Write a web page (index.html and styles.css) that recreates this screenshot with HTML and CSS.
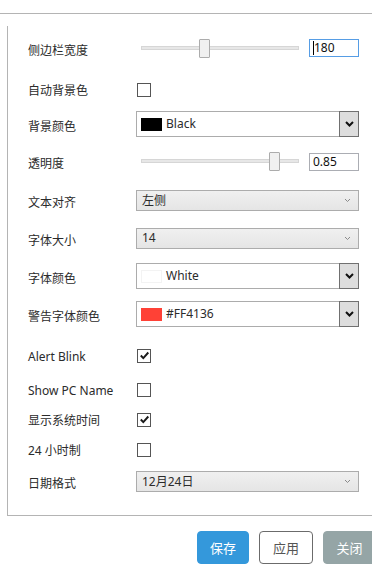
FILE: index.html
```html
<!DOCTYPE html>
<html lang="zh-CN">
<head>
    <meta charset="UTF-8">
    <meta name="viewport" content="width=device-width, initial-scale=1.0">
    <title>设置</title>
    <link rel="stylesheet" href="styles.css">
</head>
<body>
    <div class="window">
        <div class="tabs"></div>

        <div class="panel">
            <div class="form">
                <div class="label low">侧边栏宽度</div>
                <div class="field">
                    <div class="slider">
                        <div class="track"></div>
                        <div class="thumb" style="left: 58px"></div>
                    </div>
                    <div class="textbox focused"><span class="caret"></span>180</div>
                </div>

                <div class="label">自动背景色</div>
                <div class="field"><span class="checkbox"></span></div>

                <div class="label low">背景颜色</div>
                <div class="field">
                    <div class="colorbox">
                        <span class="swatch" style="background: #000000"></span>
                        <span class="value">Black</span>
                        <span class="dropbtn"><svg width="9" height="6" viewBox="0 0 9 6"><polyline points="1,1 4.5,4.5 8,1" fill="none" stroke="#111" stroke-width="2"/></svg></span>
                    </div>
                </div>

                <div class="label low">透明度</div>
                <div class="field">
                    <div class="slider">
                        <div class="track"></div>
                        <div class="thumb" style="left: 128px"></div>
                    </div>
                    <div class="textbox">0.85</div>
                </div>

                <div class="label low">文本对齐</div>
                <div class="field">
                    <div class="combo">
                        <span class="value">左侧</span>
                        <svg class="chevron" width="7" height="5" viewBox="0 0 7 5"><polyline points="1,1 3.5,3.5 6,1" fill="none" stroke="#8a8a8a" stroke-width="1"/></svg>
                    </div>
                </div>

                <div class="label low">字体大小</div>
                <div class="field">
                    <div class="combo">
                        <span class="value">14</span>
                        <svg class="chevron" width="7" height="5" viewBox="0 0 7 5"><polyline points="1,1 3.5,3.5 6,1" fill="none" stroke="#8a8a8a" stroke-width="1"/></svg>
                    </div>
                </div>

                <div class="label low">字体颜色</div>
                <div class="field">
                    <div class="colorbox">
                        <span class="swatch light" style="background: #ffffff"></span>
                        <span class="value">White</span>
                        <span class="dropbtn"><svg width="9" height="6" viewBox="0 0 9 6"><polyline points="1,1 4.5,4.5 8,1" fill="none" stroke="#111" stroke-width="2"/></svg></span>
                    </div>
                </div>

                <div class="label low">警告字体颜色</div>
                <div class="field">
                    <div class="colorbox">
                        <span class="swatch" style="background: #ff4136"></span>
                        <span class="value">#FF4136</span>
                        <span class="dropbtn"><svg width="9" height="6" viewBox="0 0 9 6"><polyline points="1,1 4.5,4.5 8,1" fill="none" stroke="#111" stroke-width="2"/></svg></span>
                    </div>
                </div>

                <div class="label">Alert Blink</div>
                <div class="field"><span class="checkbox"><svg width="11" height="11" viewBox="0 0 11 11"><polyline points="1.8,5.5 4.3,8.2 9.3,2.5" fill="none" stroke="#1a1a1a" stroke-width="1.9"/></svg></span></div>

                <div class="label">Show PC Name</div>
                <div class="field"><span class="checkbox"></span></div>

                <div class="label">显示系统时间</div>
                <div class="field"><span class="checkbox"><svg width="11" height="11" viewBox="0 0 11 11"><polyline points="1.8,5.5 4.3,8.2 9.3,2.5" fill="none" stroke="#1a1a1a" stroke-width="1.9"/></svg></span></div>

                <div class="label">24 小时制</div>
                <div class="field"><span class="checkbox"></span></div>

                <div class="label low">日期格式</div>
                <div class="field">
                    <div class="combo">
                        <span class="value">12月24日</span>
                        <svg class="chevron" width="7" height="5" viewBox="0 0 7 5"><polyline points="1,1 3.5,3.5 6,1" fill="none" stroke="#8a8a8a" stroke-width="1"/></svg>
                    </div>
                </div>
            </div>
        </div>

        <div class="actions">
            <button class="btn primary">保存</button>
            <button class="btn outline">应用</button>
            <button class="btn muted">关闭</button>
        </div>
    </div>
</body>
</html>
```

FILE: styles.css
```css
body {
    margin: 0;
    background: #ffffff;
    font-family: "Noto Sans", "Noto Sans CJK SC", sans-serif;
    font-size: 12px;
    line-height: 16px;
    color: #2b2b2b;
}
.window {
    width: 372px;
    overflow: hidden;
}
.tabs {
    height: 13px;
    border-bottom: 1px solid #b4b4b4;
}
.panel {
    margin: 12px 0 0 7px;
    border-left: 1px solid #b4b4b4;
    border-bottom: 1px solid #b4b4b4;
    padding: 1px 0 16px 20px;
}
.form {
    display: grid;
    grid-template-columns: 108px 223px;
    grid-template-rows: 42px 41px 28px 47px 31px 44px 32px 44px 39px 29px 31px 29px 35px;
    align-items: center;
}
.label {
    padding-top: 2px;
    white-space: nowrap;
}
.label.low {
    padding-top: 5px;
}
.field {
    display: flex;
    align-items: center;
}
.slider {
    position: relative;
    width: 158px;
    height: 19px;
    margin-left: 5px;
}
.track {
    position: absolute;
    left: 0;
    right: 0;
    top: 7px;
    height: 2px;
    background: #e7e7e7;
    border: 1px solid #d6d6d6;
}
.thumb {
    position: absolute;
    top: 0;
    width: 9px;
    height: 17px;
    background: #f0f0f0;
    border: 1px solid #acacac;
    border-radius: 1px;
}
.textbox {
    display: flex;
    align-items: center;
    box-sizing: border-box;
    width: 50px;
    height: 18px;
    margin-left: 10px;
    padding-left: 3px;
    border: 1px solid #abadb3;
    color: #111;
}
.textbox.focused {
    border-color: #569de5;
}
.caret {
    width: 1px;
    height: 14px;
    background: #000;
}
.checkbox {
    display: flex;
    align-items: center;
    justify-content: center;
    box-sizing: border-box;
    width: 14px;
    height: 14px;
    margin-left: 1px;
    border: 1px solid #555;
    background: #fff;
}
.colorbox {
    display: flex;
    align-items: center;
    box-sizing: border-box;
    width: 223px;
    height: 26px;
    border: 1px solid #acacac;
    padding-left: 4px;
}
.swatch {
    width: 21px;
    height: 13px;
    margin-right: 4px;
}
.swatch.light {
    box-shadow: inset 0 0 0 1px #f3f3f3;
}
.colorbox .value {
    flex: 1;
}
.dropbtn {
    display: flex;
    align-items: center;
    justify-content: center;
    box-sizing: border-box;
    width: 20px;
    height: 26px;
    margin: -1px -1px -1px 0;
    background: #dddddd;
    border: 1px solid #707070;
}
.combo {
    display: flex;
    align-items: center;
    box-sizing: border-box;
    width: 223px;
    height: 21px;
    padding: 0 7px 0 5px;
    border: 1px solid #acacac;
    background: linear-gradient(#f0f0f0, #e5e5e5);
}
.combo .value {
    flex: 1;
}
.actions {
    display: flex;
    gap: 10px;
    padding: 15px 0 0 197px;
}
.btn {
    flex: none;
    box-sizing: border-box;
    width: 52px;
    height: 33px;
    border-radius: 4px;
    font-family: "Noto Sans CJK SC", sans-serif;
    font-size: 13px;
    padding: 0;
    cursor: pointer;
}
.btn.primary {
    background: #3498db;
    border: 1px solid #3498db;
    color: #fff;
}
.btn.outline {
    width: 54px;
    background: #fff;
    border: 1px solid #6b6b6b;
    color: #555;
}
.btn.muted {
    width: 53px;
    background: #95a5a6;
    border: 1px solid #95a5a6;
    color: #fff;
}
```
